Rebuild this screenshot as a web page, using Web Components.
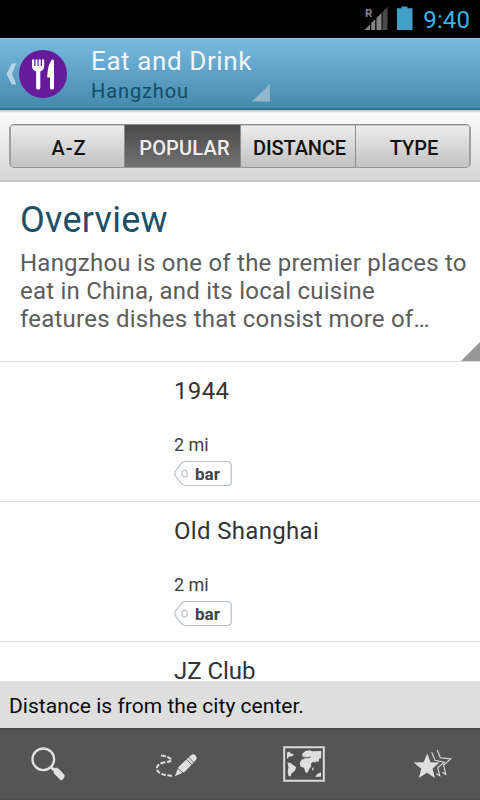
<!DOCTYPE html>
<html lang="en">
<head>
<meta charset="utf-8">
<title>Eat and Drink</title>
<style>
html,body{margin:0;width:480px;height:800px;overflow:hidden;background:#fff;font-family:Roboto,"Liberation Sans",sans-serif}
</style>
</head>
<body>
<guide-app></guide-app>
<script>
function define(name, html) {
  const template = document.createElement('template');
  template.innerHTML = html;
  customElements.define(name, class extends HTMLElement {
    constructor() {
      super();
      this.attachShadow({mode: 'open'}).append(template.content.cloneNode(true));
    }
  });
}

define('status-bar', `
<style>
:host{display:flex;height:38px;background:#000;justify-content:flex-end;align-items:flex-start;box-sizing:border-box;padding-right:10px}
svg{display:block}
span{font-size:24px;line-height:28px;margin-top:6px;color:#33b5e5;margin-left:9px;letter-spacing:.1px}
</style>
<svg width="51" height="38" viewBox="363 0 51 38">
<text x="365" y="17" font-size="11.500" font-weight="700" fill="#858585">R</text>
<path d="M364.500 30 370 24.500V30zM371.200 23.300l4-4V30h-4zM376.500 18l5-5V30h-5z" fill="#858585"/>
<path d="M382.500 12 387.500 7v23h-5z" fill="#4a4a4a"/>
<path d="M397 8.200h4.500V6.500h6v1.700h5V30H397z" fill="#419fc9"/>
</svg>
<span>9:40</span>`);

define('title-bar', `
<style>
:host{display:flex;height:72px;box-sizing:border-box;background:linear-gradient(#8cc6ea 0,#78b9df 2px,#4489ae 70px,#2e6684 71px,#3a6f8b 72px);padding-left:5px}
.titles{margin-left:23px;padding-top:8px;width:161px}
.t{font-size:26px;line-height:30px;color:#f2f5f7;letter-spacing:.6px;white-space:nowrap}
.s{font-size:20px;line-height:24px;color:#144b68;letter-spacing:.9px;margin-top:3px}
svg{display:block}
.c{margin-top:46px}
</style>
<svg width="63" height="72" viewBox="5 38 63 72">
<path d="M11.800 63.500H16.300l-4.300 10.500L16.300 84.500h-4.500L6.500 74z" fill="#b5d4e4"/>
<circle cx="43" cy="74" r="24" fill="#661b9b"/>
<path d="M32 59.500h2.200V66h1.300v-6.500h2V66h1.200v-6.500h2V66H42v-6.500h2.200V66q0 4-3.900 5.500V88q0 1.500-2.100 1.500T36.100 88V71.500Q32 70 32 66zM54 61V88q0 1.500-2 1.500T50 88V77.500h-2.800Q47.500 64 52 59.500 54 59 54 61z" fill="#fff"/>
</svg>
<div class="titles"><div class="t"><slot name="title"></slot></div><div class="s"><slot name="place"></slot></div></div>
<svg class="c" width="18" height="18"><path d="M0 17.500 18 0v17.500z" fill="#93b7c8"/></svg>`);

define('sort-tab', `
<style>
:host{display:flex;align-items:center;justify-content:center;box-sizing:border-box;border-right:1px solid #8f8b8b;font-size:20px;font-weight:500;color:#111;background:linear-gradient(#ededed,#c1c1c1);line-height:24px;padding:3px 0 0 3px;box-shadow:inset 0 1px 0 #cfc8c8}
:host([active]){background:linear-gradient(#4b4949,#727272);color:#eee;box-shadow:none;padding-left:4px}
:host(:last-child){border-right:0}
</style><slot></slot>`);

define('sort-bar', `
<style>
:host{display:block;height:72px;box-sizing:border-box;background:linear-gradient(#b8b8b8 0,#d0d0d0 1px,#fcfcfc 3px,#d5d5d5 70px,#b8b8b8 71px,#cfcfcf 72px);padding:14px 9px}
div{height:44px;width:462px;box-sizing:border-box;border:1px solid #8f8b8b;border-width:1px 2px;border-color:#8f8b8b #a0a0a0 #9b9696;border-radius:5px;overflow:hidden;display:grid;grid-template-columns:114px 116px 115px 1fr}
</style>
<div><sort-tab><span style="letter-spacing:1px">A-Z</span></sort-tab><sort-tab active><span style="letter-spacing:.2px">POPULAR</span></sort-tab><sort-tab><span style="letter-spacing:-.1px">DISTANCE</span></sort-tab><sort-tab>TYPE</sort-tab></div>`);

define('overview-panel', `
<style>
:host{display:block;position:relative;height:180px;box-sizing:border-box;border-bottom:1px solid #e0e0e0;padding:17px 0 0 20px}
h1{margin:0;font-weight:400;font-size:36px;line-height:42px;color:#1d4f68;letter-spacing:.25px}
p{margin:8px 0 0;font-size:24px;line-height:28px;color:#5c5c5c;letter-spacing:.23px;white-space:pre-line}
svg{position:absolute;right:0;bottom:0}
</style>
<h1><slot name="heading"></slot></h1><p><slot></slot></p>
<svg width="19" height="19"><path d="M0 19 19 0v19z" fill="#979797"/></svg>`);

define('tag-label', `
<style>
:host{display:block;position:relative;width:58px;height:26px}
svg{display:block}
span{position:absolute;left:21px;top:3px;font-size:17px;line-height:20px;font-weight:700;color:#3b444a}
</style>
<svg width="58" height="26"><path d="M11.500.5H53.200q4 0 4 4V20.500q0 4-4 4H11.500Q9 24.500 7 22L1.500 15q-1.300-2.500 0-5L7 3Q9 .5 11.500.5z" fill="#fff" stroke="#b5bec6" stroke-width="1.200"/><ellipse cx="10.500" cy="12.700" rx="2.700" ry="3.300" fill="none" stroke="#bbc3ca" stroke-width="1.200"/></svg>
<span><slot></slot></span>`);

define('place-row', `
<style>
:host{display:block;height:140px;box-sizing:border-box;border-bottom:1px solid #e0e0e0;padding:15px 0 0 174px;color:#333}
.n{font-size:24px;line-height:28px;letter-spacing:.33px}
.d{font-size:18px;line-height:22px;margin:29px 0 5px;color:#3c3c3c}
:host([peek]){height:39px;border:0;padding-top:19px}
:host([peek]) .n{line-height:20px;letter-spacing:-.05px}
:host([peek]) .d,:host([peek]) tag-label{display:none}
</style>
<div class="n"><slot name="name"></slot></div><div class="d">2 mi</div><tag-label>bar</tag-label>`);

define('tool-bar', `
<style>
:host{display:block;height:72px;background:linear-gradient(#4a4a4a 2px,#555 2px,#555 70px,#4d4d4d 72px)}
nav{height:72px;box-sizing:border-box;display:grid;grid-template-columns:125px 130px 130px 1fr;padding:7px 0 0 20px}
svg{display:block}
</style>
<nav>
<svg width="60" height="60"><circle cx="23.300" cy="24.300" r="10.800" fill="none" stroke="#e2e2e2" stroke-width="2.300"/><path d="M30.500 31.500 34 35" stroke="#e2e2e2" stroke-width="3"/><path d="m33 34 3-1.500 3 1.500L44.500 40q.8 3-3.500 5.500L34 38.500z" fill="#e2e2e2"/></svg>
<svg width="60" height="60"><path d="M16 20.600q9 1 10.500 4.700-2 1.700-7.500 2.200-7 1.500-7.200 6 .2 6.500 16.700 7.500" fill="none" stroke="#e0e0e0" stroke-width="2" stroke-dasharray="4.500 1.700"/><path d="m29.800 41.200 3.700-9.200 11-10.500 3.500-2.500q3.500 1 3.800 4.500L49 27.300 39.500 37z" fill="#e0e0e0"/><path d="m33 33.500 5 4.500M43.500 22l5.500 5.800M41.300 24l5.700 6" stroke="#555" stroke-width=".9"/></svg>
<svg width="60" height="60"><path d="M9.200 12.200h39.600v33.600H9.200z" fill="#505050" stroke="#dadada" stroke-width="2"/><g fill="#dfdfdf"><path d="m12 17.500 3.500-1-.5 1.800 4 1-2 2-3 .5-2 2.200z"/><path d="m12.500 27.500 3 .5 5.700 4.200-1.500 3.800-3.200 2.500-1 3-2-.5-.8-4.500.8-4z"/><path d="m27 21 .5-2.500 3-2.500 4-.8 3 1 8.700-.3v7.300l-2 .2-.7 4-2-1.500-1.500 1.800-2-1-2 2 .2 2.800-2 2.500-1.500 3.500-2 .2-1.700-5-3.500-1-.8-3.700 2-3.500 3.300-.5z"/><path d="m37 33.500 1.500-1.500v2.500l-1 1.500zM46 37.500l-3 1-3 3.300h6z"/></g><path d="M26.500 22.500q2-1 4 0t5-.5" fill="none" stroke="#505050"/></svg>
<svg width="60" height="60"><g fill="none" stroke="#dedede" stroke-width="1.100"><path d="m32.300 15 3 7.700 10.400 1.300-7 6 2 9.300-3.300-2"/><path d="m26.700 17.300 3.300 8 9.300 2-6.600 5.400 2 8-3.400-2"/></g><path d="m22.300 18.500 3.200 8.700 9 .3-6.900 6 2.300 9.500-7.900-5.200-8.200 5.200 2.500-9.200-7.600-6.300 9.900-.3z" fill="#dedede"/></svg>
</nav>`);

define('guide-app', `
<style>
:host{display:flex;flex-direction:column;width:480px;height:800px;overflow:hidden;background:#fff}
main{height:499px;overflow:hidden}
footer{height:47px;background:#dedede;box-sizing:border-box;padding:13px 9px 0;font-size:21px;line-height:25px;color:#0a0a0a;white-space:nowrap;letter-spacing:.03px}
</style>
<status-bar></status-bar>
<title-bar><span slot="title">Eat and Drink</span><span slot="place">Hangzhou</span></title-bar>
<sort-bar></sort-bar>
<main>
<overview-panel><span slot="heading">Overview</span>Hangzhou is one of the premier places to eat in China, and its local cuisine
features dishes that consist more of…</overview-panel>
<place-row><span slot="name">1944</span></place-row>
<place-row><span slot="name">Old Shanghai</span></place-row>
<place-row peek><span slot="name">JZ Club</span></place-row>
</main>
<footer>Distance is from the city center.</footer>
<tool-bar></tool-bar>`);
</script>
</body>
</html>
